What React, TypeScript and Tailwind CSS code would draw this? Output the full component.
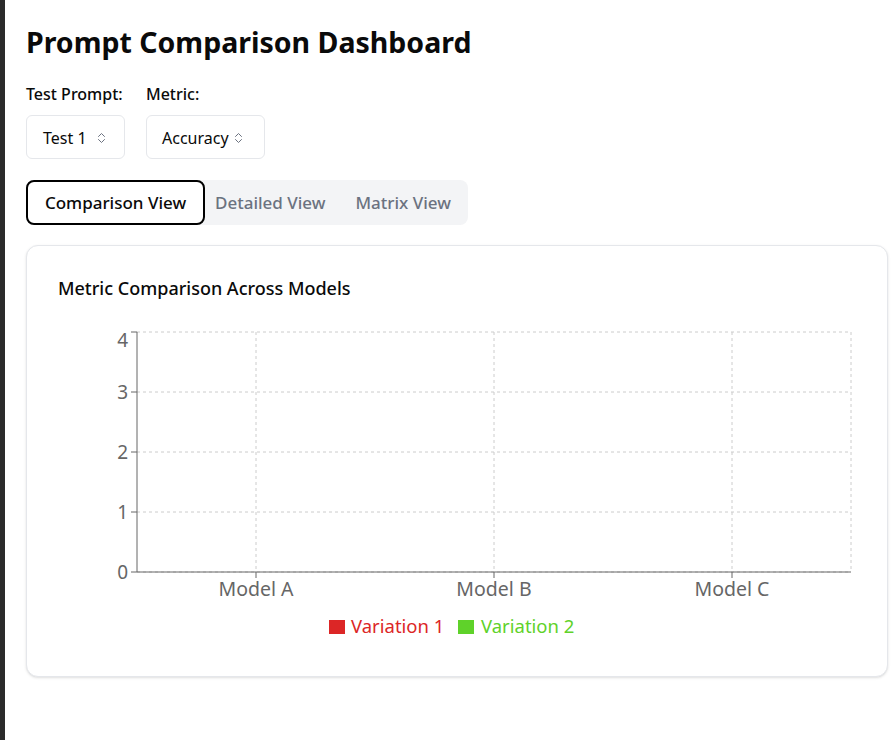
import React from "react";

const Chevrons = () => (
  <svg width="9" height="12" viewBox="0 0 9 12" fill="none" stroke="#6b7280" strokeWidth="1" strokeLinecap="round" strokeLinejoin="round">
    <path d="M1.5 4.5 L4.5 1.5 L7.5 4.5" />
    <path d="M1.5 7.5 L4.5 10.5 L7.5 7.5" />
  </svg>
);

const Chart = () => {
  const left = 79;
  const right = 793;
  const top = 30;
  const bottom = 270;
  const ys = [0, 1, 2, 3, 4];
  const yPos = (v: number) => bottom - (v * (bottom - top)) / 4;
  const cats = ["Model A", "Model B", "Model C"];
  const band = (right - left) / 3;
  return (
    <svg width="798" height="345" className="block" style={{ fontFamily: '"Noto Sans", "Open Sans", sans-serif' }}>
      {ys.map((v) => (
        <line key={"h" + v} x1={left} x2={right} y1={yPos(v)} y2={yPos(v)} stroke="#ccc" strokeDasharray="3 3" />
      ))}
      {cats.map((c, i) => (
        <line key={"v" + c} x1={left + band * (i + 0.5)} x2={left + band * (i + 0.5)} y1={top} y2={bottom} stroke="#ccc" strokeDasharray="3 3" />
      ))}
      <line x1={right} x2={right} y1={top} y2={bottom} stroke="#ccc" strokeDasharray="3 3" />
      <line x1={left} x2={left} y1={top} y2={bottom} stroke="#666" />
      <line x1={left} x2={right} y1={bottom} y2={bottom} stroke="#666" />
      {ys.map((v) => (
        <g key={"t" + v}>
          <line x1={left - 6} x2={left} y1={yPos(v)} y2={yPos(v)} stroke="#666" />
          <text x={left - 9} y={yPos(v) + (v === 4 ? 15 : 7)} textAnchor="end" fontSize="19" fill="#666">
            {v}
          </text>
        </g>
      ))}
      {cats.map((c, i) => (
        <g key={"x" + c}>
          <line x1={left + band * (i + 0.5)} x2={left + band * (i + 0.5)} y1={bottom} y2={bottom + 6} stroke="#666" />
          <text x={left + band * (i + 0.5)} y={bottom + 24} textAnchor="middle" fontSize="19.5" fill="#666">
            {c}
          </text>
        </g>
      ))}
      <rect x={271} y={318} width={16} height={14} fill="#dc2626" />
      <text x={293} y={331} fontSize="18.5" fill="#dc2626">Variation 1</text>
      <rect x={400} y={318} width={16} height={14} fill="#5fd22a" />
      <text x={423} y={331} fontSize="18.5" fill="#5fd22a">Variation 2</text>
    </svg>
  );
};

export default function App() {
  return (
    <div className="flex min-h-[740px] bg-white" style={{ fontFamily: '"Noto Sans", "Open Sans", sans-serif' }}>
      <div className="w-[5px] shrink-0 bg-[#2b2b2b]" />
      <div className="flex-1 pl-[21px] pt-6 text-[#0a0a0a]">
        <h1 className="text-[28.5px] font-bold leading-9">Prompt Comparison Dashboard</h1>
        <div className="mt-[22px] flex gap-[21px]">
          <div className="flex w-[99px] flex-col gap-[9px]">
            <label className="whitespace-nowrap text-[16px] font-medium leading-6">Test Prompt:</label>
            <div className="flex h-[44px] w-[99px] items-center gap-[10px] rounded-md border border-[#e5e7eb] bg-white pl-4 pt-[2px] text-[16px]">
              <span>Test 1</span>
              <Chevrons />
            </div>
          </div>
          <div className="flex flex-col gap-[9px]">
            <label className="text-[16px] font-medium leading-6">Metric:</label>
            <div className="flex h-[44px] w-[119px] items-center gap-[5px] rounded-md border border-[#e5e7eb] bg-white pl-[15px] pt-[2px] text-[16px]">
              <span>Accuracy</span>
              <Chevrons />
            </div>
          </div>
        </div>
        <div className="mt-[21px] flex h-[45px] w-[442px] items-center rounded-lg bg-[#f3f4f6]">
          <div className="flex h-[45px] w-[179px] items-center justify-center rounded-lg border-2 border-black bg-white text-[17px] font-medium">
            Comparison View
          </div>
          <div className="ml-[10px] text-[17px] font-medium text-[#6b7280]">Detailed View</div>
          <div className="ml-[30px] text-[17px] font-medium text-[#6b7280]">Matrix View</div>
        </div>
        <div className="mt-5 w-[862px] rounded-xl border border-[#e5e7eb] bg-white px-[31px] pb-[29px] pt-7 shadow-sm">
          <h2 className="text-[18px] font-medium leading-7">Metric Comparison Across Models</h2>
          <Chart />
        </div>
      </div>
    </div>
  );
}
